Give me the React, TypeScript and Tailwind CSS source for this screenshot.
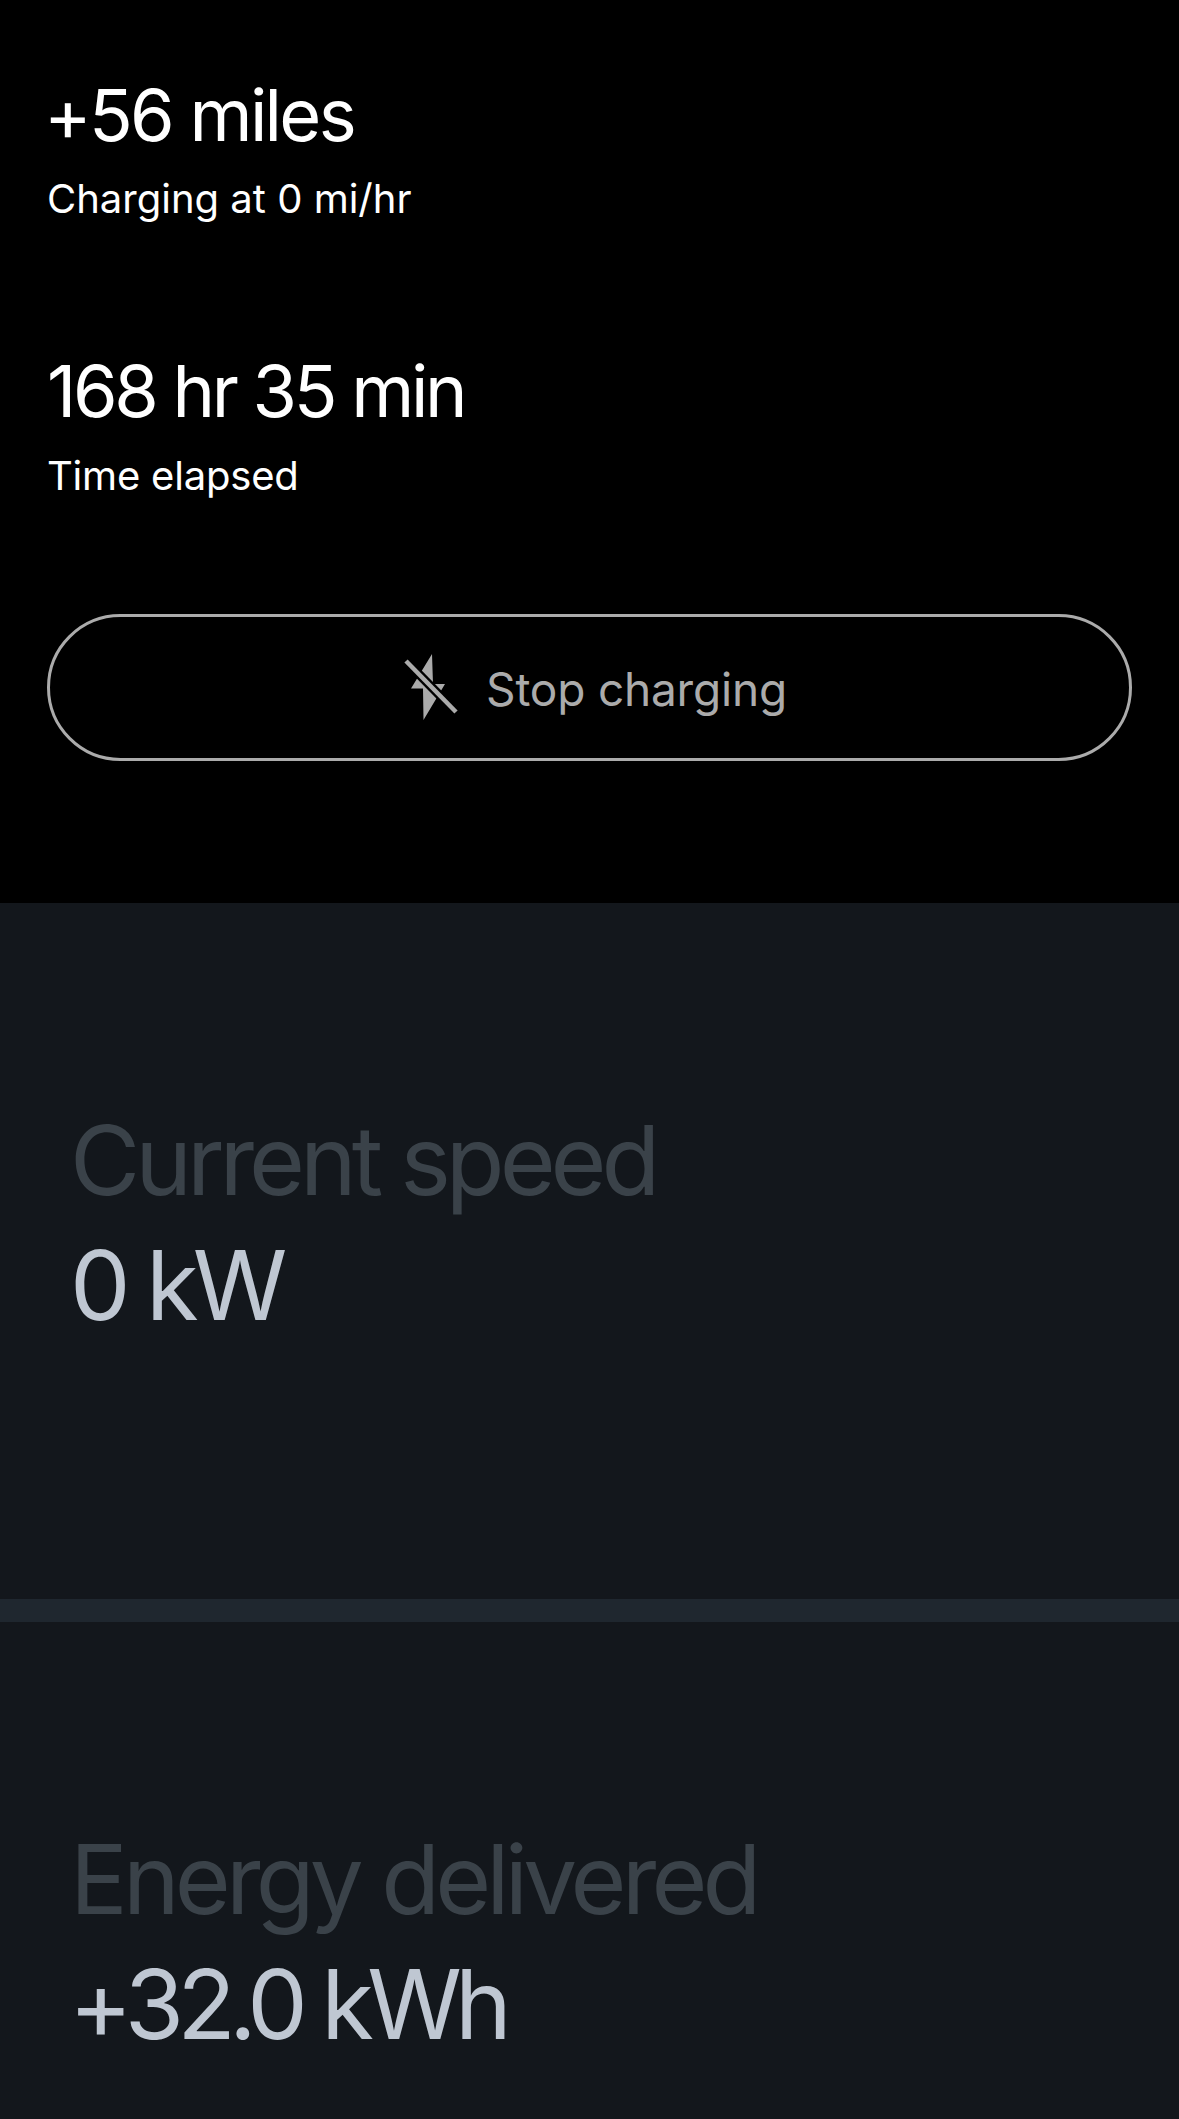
export default function App() {
  return (
    <div className="w-[1179px] h-[2119px] overflow-hidden bg-black font-['Inter',sans-serif]">
      <section className="h-[903px] bg-black px-[47px] pt-[69px]">
        <div className="text-white">
          <div className="-ml-[3px] text-[72px] leading-[92px] tracking-[-2.7px]">+56 miles</div>
          <div className="mt-[13px] text-[40px] leading-[50px]">Charging at 0 mi/hr</div>
        </div>
        <div className="mt-[121px] text-white">
          <div className="text-[72px] leading-[92px] tracking-[-3.3px]">168 hr 35 min</div>
          <div className="mt-[14px] text-[40px] leading-[50px] tracking-[-0.2px]">Time elapsed</div>
        </div>
        <div className="mt-[113px] flex h-[147px] items-center justify-center gap-[25px] rounded-[74px] border-[3.5px] border-[#ababab] pl-[9px] pt-[4px] text-[46px] tracking-[-0.2px] text-[#ababab]">
          <svg width="60" height="75" viewBox="0 0 60 75" fill="none" className="-mt-[4px]">
            <path d="M31 4 L10 38.5 L22 38.5 L22.5 70 L44 34 L32 34 Z" fill="#ababab" />
            <path d="M5 11 L55 62" stroke="#000" strokeWidth="9" />
            <path d="M5 11 L55 62" stroke="#ababab" strokeWidth="4.5" />
          </svg>
          <span>Stop charging</span>
        </div>
      </section>
      <section className="h-[696px] bg-[#13171c] px-[70px] pt-[195px]">
        <div className="text-[96px] leading-[125px] tracking-[-5px] text-[#3a4249]">Current speed</div>
        <div className="text-[96px] leading-[125px] tracking-[-5.8px] text-[#bfc7d2]">0 kW</div>
      </section>
      <div className="h-[23px] bg-[#1f272f]" />
      <section className="h-[497px] bg-[#13171c] px-[70px] pt-[195px]">
        <div className="text-[96px] leading-[125px] tracking-[-4.8px] text-[#3a4249]">Energy delivered</div>
        <div className="-ml-[1px] text-[96px] leading-[125px] tracking-[-6.8px] text-[#bfc7d2]">+32.0 kWh</div>
      </section>
    </div>
  );
}
